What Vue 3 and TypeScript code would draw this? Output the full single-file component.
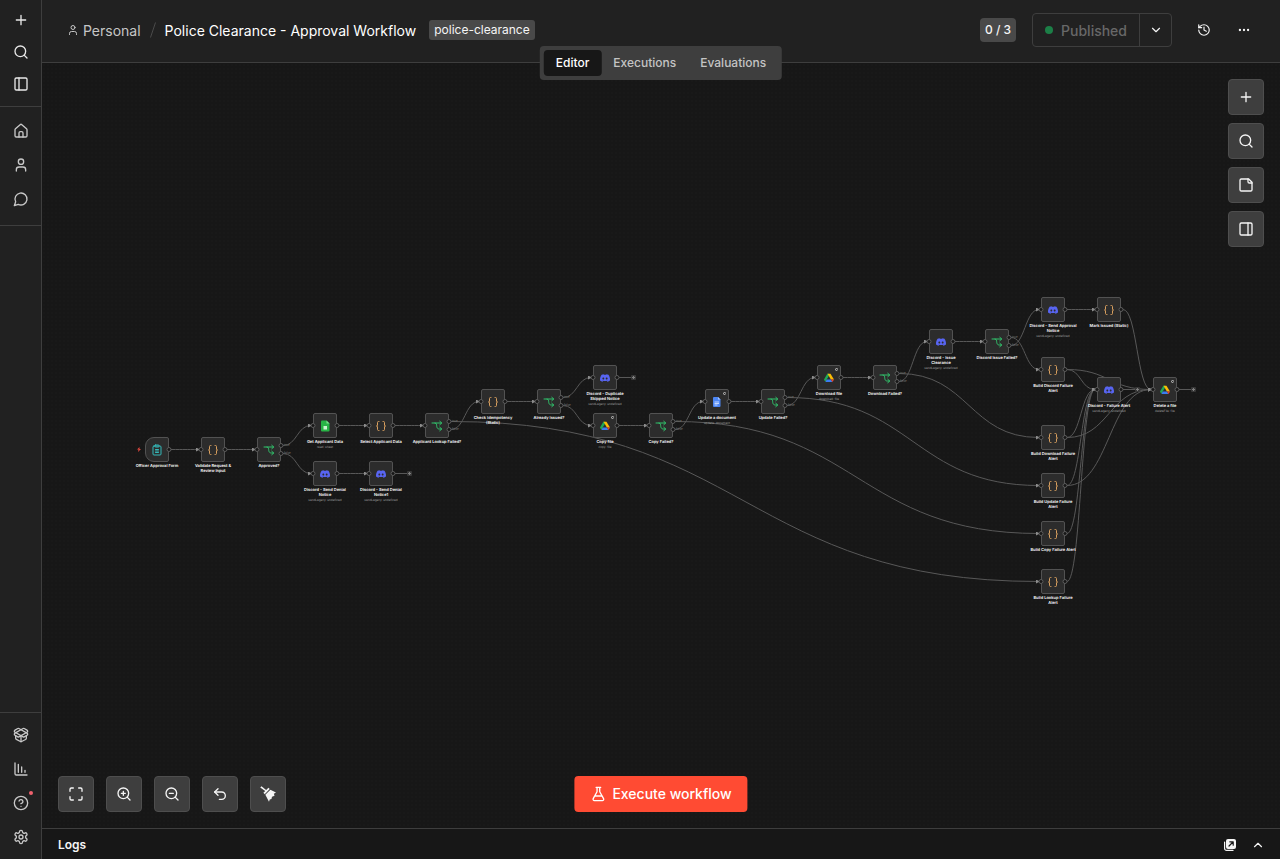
<script setup lang="ts">
import { ref } from 'vue'

type Kind = 'form' | 'code' | 'if' | 'sheets' | 'docs' | 'drive' | 'discord'

interface FlowNode {
  id: string
  kind: Kind
  col: number
  y: number
  label: string
  sub?: string
  retry?: boolean
  open?: boolean
}

const COLUMN = 56
const FIRST = 115
const SEND = 'sendLegacy: undefined'

const nodes: FlowNode[] = [
  { id: 'form', kind: 'form', col: 0, y: 386, label: 'Officer Approval Form' },
  { id: 'validate', kind: 'code', col: 1, y: 386, label: 'Validate Request &\nReview Input' },
  { id: 'approved', kind: 'if', col: 2, y: 386, label: 'Approved?' },
  { id: 'get', kind: 'sheets', col: 3, y: 362, label: 'Get Applicant Data', sub: 'read: sheet' },
  { id: 'denial', kind: 'discord', col: 3, y: 410, label: 'Discord - Send Denial\nNotice', sub: SEND },
  { id: 'select', kind: 'code', col: 4, y: 362, label: 'Select Applicant Data' },
  { id: 'denial1', kind: 'discord', col: 4, y: 410, label: 'Discord - Send Denial\nNotice1', sub: SEND, open: true },
  { id: 'lookupFailed', kind: 'if', col: 5, y: 362, label: 'Applicant Lookup Failed?' },
  { id: 'idempotency', kind: 'code', col: 6, y: 338, label: 'Check Idempotency\n(Static)' },
  { id: 'issued', kind: 'if', col: 7, y: 338, label: 'Already Issued?' },
  { id: 'duplicate', kind: 'discord', col: 8, y: 314, label: 'Discord - Duplicate\nSkipped Notice', sub: SEND, open: true },
  { id: 'copy', kind: 'drive', col: 8, y: 362, label: 'Copy file', sub: 'copy: file', retry: true },
  { id: 'copyFailed', kind: 'if', col: 9, y: 362, label: 'Copy Failed?' },
  { id: 'update', kind: 'docs', col: 10, y: 338, label: 'Update a document', sub: 'update: document', retry: true },
  { id: 'updateFailed', kind: 'if', col: 11, y: 338, label: 'Update Failed?' },
  { id: 'download', kind: 'drive', col: 12, y: 314, label: 'Download file', sub: 'download: file', retry: true },
  { id: 'downloadFailed', kind: 'if', col: 13, y: 314, label: 'Download Failed?' },
  { id: 'clearance', kind: 'discord', col: 14, y: 278, label: 'Discord - Issue\nClearance', sub: SEND },
  { id: 'issueFailed', kind: 'if', col: 15, y: 278, label: 'Discord Issue Failed?' },
  { id: 'approval', kind: 'discord', col: 16, y: 246, label: 'Discord - Send Approval\nNotice', sub: SEND },
  { id: 'buildDiscord', kind: 'code', col: 16, y: 306, label: 'Build Discord Failure\nAlert' },
  { id: 'buildDownload', kind: 'code', col: 16, y: 374, label: 'Build Download Failure\nAlert' },
  { id: 'buildUpdate', kind: 'code', col: 16, y: 422, label: 'Build Update Failure\nAlert' },
  { id: 'buildCopy', kind: 'code', col: 16, y: 470, label: 'Build Copy Failure Alert' },
  { id: 'buildLookup', kind: 'code', col: 16, y: 518, label: 'Build Lookup Failure\nAlert' },
  { id: 'mark', kind: 'code', col: 17, y: 246, label: 'Mark Issued (Static)' },
  { id: 'failure', kind: 'discord', col: 17, y: 326, label: 'Discord - Failure Alert', sub: SEND, open: true },
  { id: 'delete', kind: 'drive', col: 18, y: 326, label: 'Delete a file', sub: 'deleteFile: file', retry: true, open: true },
]

// [source, target, vertical shift of the source handle]
const links: [string, string, number][] = [
  ['form', 'validate', 0],
  ['validate', 'approved', 0],
  ['approved', 'get', -4],
  ['approved', 'denial', 4],
  ['get', 'select', 0],
  ['denial', 'denial1', 0],
  ['select', 'lookupFailed', 0],
  ['lookupFailed', 'buildLookup', -4],
  ['lookupFailed', 'idempotency', 4],
  ['idempotency', 'issued', 0],
  ['issued', 'duplicate', -4],
  ['issued', 'copy', 4],
  ['copy', 'copyFailed', 0],
  ['copyFailed', 'buildCopy', -4],
  ['copyFailed', 'update', 4],
  ['update', 'updateFailed', 0],
  ['updateFailed', 'buildUpdate', -4],
  ['updateFailed', 'download', 4],
  ['download', 'downloadFailed', 0],
  ['downloadFailed', 'buildDownload', -4],
  ['downloadFailed', 'clearance', 4],
  ['clearance', 'issueFailed', 0],
  ['issueFailed', 'buildDiscord', -4],
  ['issueFailed', 'approval', 4],
  ['approval', 'mark', 0],
  ['mark', 'delete', 0],
  ['buildDiscord', 'failure', 0],
  ['buildDiscord', 'delete', 0],
  ['buildDownload', 'failure', 0],
  ['buildDownload', 'delete', 0],
  ['buildUpdate', 'failure', 0],
  ['buildUpdate', 'delete', 0],
  ['buildCopy', 'failure', 0],
  ['buildLookup', 'failure', 0],
]

const byId = new Map(nodes.map((n) => [n.id, n]))
const cx = (n: FlowNode): number => FIRST + n.col * COLUMN
// Boxes are 25px high, so their middle lies on a half pixel.
const cy = (n: FlowNode): number => n.y + 0.5

const edges = links.map(([from, to, shift]) => {
  const s = byId.get(from)!
  const t = byId.get(to)!
  const x1 = cx(s) + 14
  const x2 = cx(t) - 14
  const y1 = cy(s) + shift
  const mid = (x1 + x2) / 2
  return { key: from + to, d: `M${x1} ${y1}C${mid} ${y1} ${mid} ${cy(t)} ${x2} ${cy(t)}` }
})

const inputs = nodes.filter((n) => n.kind !== 'form')
const openEnds = nodes.filter((n) => n.open)
const outputs = nodes.flatMap((n) =>
  n.kind === 'if'
    ? [{ x: cx(n) + 12, y: cy(n) - 4 }, { x: cx(n) + 12, y: cy(n) + 4 }]
    : [{ x: cx(n) + 12, y: cy(n) }],
)

const place = (n: FlowNode) => ({ left: `${cx(n) - 28}px`, top: `${n.y - 12}px` })

const tabs = ['Editor', 'Executions', 'Evaluations']
const active = ref('Editor')

const topNav = [
  { icon: 'plus', label: 'Create' },
  { icon: 'search', label: 'Search' },
  { icon: 'panel-left', label: 'Expand sidebar' },
]
const mainNav = [
  { icon: 'house', label: 'Overview' },
  { icon: 'user', label: 'Personal' },
  { icon: 'chat', label: 'Chat' },
]
const footNav = [
  { icon: 'package', label: 'Templates' },
  { icon: 'chart', label: 'Insights' },
  { icon: 'help', label: 'Help', dot: true },
  { icon: 'settings', label: 'Settings' },
]
const sideTools = [
  { icon: 'plus', label: 'Add node' },
  { icon: 'search', label: 'Search nodes' },
  { icon: 'note', label: 'Add sticky note' },
  { icon: 'panel-right', label: 'Open panel' },
]
const viewTools = [
  { icon: 'maximize', label: 'Fit view' },
  { icon: 'zoom-in', label: 'Zoom in' },
  { icon: 'zoom-out', label: 'Zoom out' },
  { icon: 'undo', label: 'Reset zoom' },
  { icon: 'broom', label: 'Tidy up' },
]
</script>

<template>
  <div class="app">
    <svg class="sprite" aria-hidden="true">
      <symbol id="plus" viewBox="0 0 24 24"><path d="M5 12h14M12 5v14" /></symbol>
      <symbol id="search" viewBox="0 0 24 24"><circle cx="11" cy="11" r="8" /><path d="m21 21-4.3-4.3" /></symbol>
      <symbol id="panel-left" viewBox="0 0 24 24"><rect x="3" y="3" width="18" height="18" rx="2" /><path d="M9 3v18" /></symbol>
      <symbol id="panel-right" viewBox="0 0 24 24"><rect x="3" y="3" width="18" height="18" rx="2" /><path d="M15 3v18" /></symbol>
      <symbol id="house" viewBox="0 0 24 24"><path d="M15 21v-6a2 2 0 0 0-2-2h-2a2 2 0 0 0-2 2v6" /><path d="M3 10a2 2 0 0 1 .7-1.5l7-6a2 2 0 0 1 2.600 0l7 6A2 2 0 0 1 21 10v9a2 2 0 0 1-2 2H5a2 2 0 0 1-2-2z" /></symbol>
      <symbol id="user" viewBox="0 0 24 24"><path d="M19 21v-2a4 4 0 0 0-4-4H9a4 4 0 0 0-4 4v2" /><circle cx="12" cy="7" r="4" /></symbol>
      <symbol id="chat" viewBox="0 0 24 24"><path d="M7.9 20A9 9 0 1 0 4 16.100L2 22Z" /></symbol>
      <symbol id="package" viewBox="0 0 24 24"><path d="M12 22v-9M15.170 2.210a1.670 1.670 0 0 1 1.630 0L21 4.570a1.930 1.930 0 0 1 0 3.360L8.820 14.790a1.655 1.655 0 0 1-1.640 0L3 12.430a1.930 1.930 0 0 1 0-3.360z" /><path d="M20 13v3.870a2.060 2.060 0 0 1-1.110 1.830l-6 3.080a1.930 1.930 0 0 1-1.780 0l-6-3.080A2.060 2.060 0 0 1 4 16.870V13" /><path d="M21 12.430a1.930 1.930 0 0 0 0-3.360L8.830 2.200a1.640 1.640 0 0 0-1.630 0L3 4.570a1.930 1.930 0 0 0 0 3.360l12.180 6.860a1.636 1.636 0 0 0 1.630 0z" /></symbol>
      <symbol id="chart" viewBox="0 0 24 24"><path d="M13 17V9M18 17v-3M3 3v16a2 2 0 0 0 2 2h16M8 17V5" /></symbol>
      <symbol id="help" viewBox="0 0 24 24"><circle cx="12" cy="12" r="10" /><path d="M9.090 9a3 3 0 0 1 5.830 1c0 2-3 3-3 3M12 17h.01" /></symbol>
      <symbol id="settings" viewBox="0 0 24 24"><path d="M12.220 2h-.44a2 2 0 0 0-2 2v.18a2 2 0 0 1-1 1.730l-.43.25a2 2 0 0 1-2 0l-.15-.08a2 2 0 0 0-2.730.73l-.22.38a2 2 0 0 0 .73 2.730l.15.1a2 2 0 0 1 1 1.720v.51a2 2 0 0 1-1 1.740l-.15.09a2 2 0 0 0-.73 2.730l.22.38a2 2 0 0 0 2.730.73l.15-.08a2 2 0 0 1 2 0l.43.25a2 2 0 0 1 1 1.730V20a2 2 0 0 0 2 2h.44a2 2 0 0 0 2-2v-.18a2 2 0 0 1 1-1.730l.43-.25a2 2 0 0 1 2 0l.15.08a2 2 0 0 0 2.730-.73l.22-.39a2 2 0 0 0-.73-2.730l-.15-.08a2 2 0 0 1-1-1.740v-.5a2 2 0 0 1 1-1.740l.15-.09a2 2 0 0 0 .73-2.730l-.22-.38a2 2 0 0 0-2.730-.73l-.15.08a2 2 0 0 1-2 0l-.43-.25a2 2 0 0 1-1-1.730V4a2 2 0 0 0-2-2z" /><circle cx="12" cy="12" r="3" /></symbol>
      <symbol id="note" viewBox="0 0 24 24"><path d="M16 3H5a2 2 0 0 0-2 2v14a2 2 0 0 0 2 2h14a2 2 0 0 0 2-2V8Z" /><path d="M15 3v4a2 2 0 0 0 2 2h4" /></symbol>
      <symbol id="maximize" viewBox="0 0 24 24"><path d="M8 3H5a2 2 0 0 0-2 2v3M21 8V5a2 2 0 0 0-2-2h-3M3 16v3a2 2 0 0 0 2 2h3M16 21h3a2 2 0 0 0 2-2v-3" /></symbol>
      <symbol id="zoom-in" viewBox="0 0 24 24"><circle cx="11" cy="11" r="8" /><path d="m21 21-4.300-4.300M11 8v6M8 11h6" /></symbol>
      <symbol id="zoom-out" viewBox="0 0 24 24"><circle cx="11" cy="11" r="8" /><path d="m21 21-4.300-4.300M8 11h6" /></symbol>
      <symbol id="undo" viewBox="0 0 24 24"><path d="M9 14 4 9l5-5" /><path d="M4 9h10.500a5.500 5.500 0 0 1 0 11H11" /></symbol>
      <symbol id="broom" viewBox="0 0 24 24"><g fill="currentColor" stroke="none"><path d="M.4 2.200 2.200.4 9.200 6l3.400-3.400 2 2L7.100 12.200l-2-2L7.800 7.500z" /><path d="m8 13.200 7.600-7.600L24 9.600l-3.200 2.200 1 2.700-3.800 1.500-.8 3.400-2.600 1-1.100 3.400z" /></g></symbol>
      <symbol id="history" viewBox="0 0 24 24"><path d="M3 12a9 9 0 1 0 9-9 9.750 9.750 0 0 0-6.740 2.740L3 8" /><path d="M3 3v5h5M12 7v5l4 2" /></symbol>
      <symbol id="dots" viewBox="0 0 24 24"><g fill="currentColor"><circle cx="5" cy="12" r="1" /><circle cx="12" cy="12" r="1" /><circle cx="19" cy="12" r="1" /></g></symbol>
      <symbol id="down" viewBox="0 0 24 24"><path d="m6 9 6 6 6-6" /></symbol>
      <symbol id="up" viewBox="0 0 24 24"><path d="m18 15-6-6-6 6" /></symbol>
      <symbol id="flask" viewBox="0 0 24 24"><path d="M14 2v6a2 2 0 0 0 .245.96l5.510 10.080A2 2 0 0 1 18 22H6a2 2 0 0 1-1.755-2.960l5.510-10.080A2 2 0 0 0 10 8V2M6.453 15h11.094M8.500 2h7" /></symbol>
      <symbol id="popout" viewBox="0 0 12 12"><rect x="2" y="0" width="10" height="10" rx="2" fill="currentColor" stroke="none" /><path d="M.6 3v6.400a2 2 0 0 0 2 2H9" stroke-width="1.200" /><path d="M5 7 9 3M5.800 2.800H9.200V6.200" stroke="#171717" stroke-width="1.200" /></symbol>

      <symbol id="n-code" viewBox="0 0 24 24"><path stroke="#d9a05f" d="M8 3H7a2 2 0 0 0-2 2v5a2 2 0 0 1-2 2 2 2 0 0 1 2 2v5c0 1.100.9 2 2 2h1M16 21h1a2 2 0 0 0 2-2v-5c0-1.100.9-2 2-2a2 2 0 0 1-2-2V5a2 2 0 0 0-2-2h-1" /></symbol>
      <symbol id="n-if" viewBox="0 0 24 24"><path stroke="#31c46c" d="M2 6h19M17.500 2.500 21.500 6l-4 3.500M8 6c4 0 3 4 3.500 7s2 5 5 5h4.500M17.500 14.500l4 3.500-4 3.500" /></symbol>
      <symbol id="n-form" viewBox="0 0 24 24"><g stroke="#34b8b8"><rect x="4" y="4" width="16" height="18" rx="2" /><rect x="8" y="2" width="8" height="4" rx="1" /><path d="M9 11h6M9 14h6M9 17h6" /></g></symbol>
      <symbol id="n-discord" viewBox="0 0 24 24"><path fill="#5865f2" stroke="none" d="M20.300 4.400A19.800 19.800 0 0 0 15.400 2.900l-.6 1.300a18.300 18.300 0 0 0-5.500 0l-.6-1.300a19.700 19.700 0 0 0-4.900 1.500C.5 9 -.3 13.600.1 18.100a19.900 19.900 0 0 0 6 3l1.300-2-1.900-.9.400-.3a14.200 14.200 0 0 0 12.200 0l.4.300-1.900.9 1.300 2a19.800 19.800 0 0 0 6-3c.5-5.200-.8-9.700-3.600-13.700ZM8 15.300c-1.200 0-2.200-1.100-2.200-2.400s1-2.400 2.200-2.400 2.200 1.100 2.200 2.400-1 2.400-2.200 2.400Zm8 0c-1.200 0-2.200-1.100-2.200-2.400s1-2.400 2.200-2.400 2.200 1.100 2.200 2.400-1 2.400-2.200 2.400Z" /></symbol>
      <symbol id="n-sheets" viewBox="0 0 24 24"><g stroke="none"><path fill="#28b446" d="M6 1h9l6 6v14a2 2 0 0 1-2 2H6a2 2 0 0 1-2-2V3a2 2 0 0 1 2-2z" /><path fill="#7fe08f" d="M15 1v6h6z" /><rect x="9" y="12" width="7" height="7" fill="#c9f5cf" /></g></symbol>
      <symbol id="n-docs" viewBox="0 0 24 24"><g stroke="none"><path fill="#4d87f5" d="M6 2h8l5 5v13a2 2 0 0 1-2 2H6a2 2 0 0 1-2-2V4a2 2 0 0 1 2-2z" /><path fill="#a9c8ff" d="M14 2v5h5z" /><path fill="#c4d8ff" d="M7 11h9v2H7zM7 14h9v2H7zM7 17h6v2H7z" /></g></symbol>
      <symbol id="n-drive" viewBox="0 0 24 24"><g stroke="none"><path fill="#1fa955" d="M8 2h4.500l1 2L5.500 17.500 3 21 0 15.500z" /><path fill="#fbbc04" d="M8.500 2h7L24 15.500h-7.500z" /><path fill="#3b7df0" d="M6.500 15.500h10L20 21.500H3.500z" /><path fill="#e8442f" d="M16.500 15.500H24l-3.500 6z" /></g></symbol>
    </svg>

    <aside class="rail">
      <nav class="group top" aria-label="Quick actions">
        <button v-for="i in topNav" :key="i.icon" class="rail-item" type="button" :aria-label="i.label">
          <svg class="icon"><use :href="'#' + i.icon" /></svg>
        </button>
      </nav>
      <nav class="group main-nav" aria-label="Main">
        <a v-for="i in mainNav" :key="i.icon" class="rail-item" href="#" :aria-label="i.label">
          <svg class="icon"><use :href="'#' + i.icon" /></svg>
        </a>
      </nav>
      <nav class="group foot" aria-label="More">
        <a v-for="i in footNav" :key="i.icon" class="rail-item" href="#" :aria-label="i.label">
          <svg class="icon"><use :href="'#' + i.icon" /></svg>
          <span v-if="i.dot" class="alert-dot"></span>
        </a>
      </nav>
    </aside>

    <div class="content">
      <header class="bar">
        <a class="owner" href="#">
          <svg class="icon tiny"><use href="#user" /></svg>
          <span>Personal</span>
        </a>
        <svg class="slash" viewBox="0 0 6 16"><path d="M5.500.5.500 15.500" /></svg>
        <h1 class="title">Police Clearance - Approval Workflow</h1>
        <span class="tag">police-clearance</span>
        <div class="actions">
          <span class="count">0 / 3</span>
          <div class="publish">
            <button class="published" type="button" disabled><i class="dot"></i>Published</button>
            <button class="more" type="button" aria-label="Publish options">
              <svg class="icon small"><use href="#down" /></svg>
            </button>
          </div>
          <div class="menu">
            <button class="ghost" type="button" aria-label="Version history">
              <svg class="icon small"><use href="#history" /></svg>
            </button>
            <button class="ghost" type="button" aria-label="Workflow menu">
              <svg class="icon small"><use href="#dots" /></svg>
            </button>
          </div>
        </div>
      </header>

      <div class="tabs" role="tablist">
        <button
          v-for="t in tabs"
          :key="t"
          type="button"
          role="tab"
          class="tab"
          :class="{ active: t === active }"
          :aria-selected="t === active"
          @click="active = t"
        >{{ t }}</button>
      </div>

      <main class="canvas">
        <svg class="edges" aria-hidden="true">
          <defs>
            <marker id="arrow" viewBox="0 0 4 4" refX="3" refY="2" markerWidth="4" markerHeight="4" markerUnits="userSpaceOnUse" orient="0">
              <path d="M0 0 4 2 0 4z" fill="#8c8c8c" />
            </marker>
          </defs>
          <path v-for="e in edges" :key="e.key" class="edge" :d="e.d" marker-end="url(#arrow)" />
          <path v-for="n in openEnds" :key="n.id" class="edge" :d="`M${cx(n) + 14} ${cy(n)}h12`" />
        </svg>

        <div v-for="n in nodes" :key="n.id" class="node" :style="place(n)">
          <div class="box" :class="{ trigger: n.kind === 'form' }">
            <svg class="node-icon" :class="n.kind"><use :href="'#n-' + n.kind" /></svg>
          </div>
          <span class="label">{{ n.label }}</span>
          <span v-if="n.sub" class="sub">{{ n.sub }}</span>
        </div>

        <svg class="edges" aria-hidden="true">
          <path class="bolt" d="M97.500 384 95 386.500h1.500L96 389l3-3h-1.500z" />
          <circle v-for="n in inputs" :key="n.id" class="handle" :cx="cx(n) - 12" :cy="cy(n)" r="2" />
          <circle v-for="(o, k) in outputs" :key="k" class="handle" :cx="o.x" :cy="o.y" r="2" />
          <template v-for="n in nodes" :key="n.id">
            <template v-if="n.kind === 'if'">
              <text class="branch" :x="cx(n) + 15" :y="n.y - 3">true</text>
              <text class="branch" :x="cx(n) + 15" :y="n.y + 5">false</text>
            </template>
            <path v-if="n.retry" class="retry" :d="`M${cx(n) + 8.500} ${cy(n) - 8}a1 1 0 1 1-1-1h1`" />
            <g v-if="n.open">
              <rect class="end" :x="cx(n) + 26" :y="n.y - 2" width="5" height="5" rx="1" />
              <path class="end-plus" :d="`M${cx(n) + 27} ${cy(n)}h3m-1.500-1.500v3`" />
            </g>
          </template>
        </svg>

        <div class="side-tools">
          <button v-for="t in sideTools" :key="t.icon" class="tool" type="button" :aria-label="t.label">
            <svg class="icon"><use :href="'#' + t.icon" /></svg>
          </button>
        </div>
        <div class="view-tools">
          <button v-for="t in viewTools" :key="t.icon" class="tool" type="button" :aria-label="t.label">
            <svg class="icon"><use :href="'#' + t.icon" /></svg>
          </button>
        </div>
        <button class="execute" type="button">
          <svg class="icon"><use href="#flask" /></svg>
          <span>Execute workflow</span>
        </button>
      </main>

      <footer class="logs">
        <span class="logs-title">Logs</span>
        <button class="log-btn" type="button" aria-label="Pop out logs"><svg class="icon pop"><use href="#popout" /></svg></button>
        <button class="log-btn" type="button" aria-label="Open logs"><svg class="icon small"><use href="#up" /></svg></button>
      </footer>
    </div>
  </div>
</template>

<style>
html,
body {
  background: #171717;
}
</style>

<style scoped>
.app {
  display: flex;
  min-height: 100vh;
  background: #171717;
  color: #f5f5f5;
  font-family: Inter, "Liberation Sans", sans-serif;
  font-size: 14px;
}
.app * {
  box-sizing: border-box;
}
button {
  margin: 0;
  padding: 0;
  border: 0;
  background: none;
  color: inherit;
  font: inherit;
  display: flex;
  align-items: center;
  justify-content: center;
}
a {
  color: inherit;
  text-decoration: none;
}
.sprite {
  position: absolute;
  width: 0;
  height: 0;
}
.icon {
  flex: none;
  width: 16px;
  height: 16px;
  fill: none;
  stroke: currentColor;
  stroke-width: 2;
  stroke-linecap: round;
  stroke-linejoin: round;
}
.icon.small {
  width: 14px;
  height: 14px;
}
.icon.tiny,
.icon.pop {
  width: 12px;
  height: 12px;
}

.rail {
  flex: none;
  width: 42px;
  display: flex;
  flex-direction: column;
  background: #212121;
  border-right: 1px solid #3e3e3e;
  color: #c8c8c8;
}
.group {
  display: flex;
  flex-direction: column;
}
.top {
  padding: 4px 0 6px;
  border-bottom: 1px solid #3e3e3e;
  color: #e8e8e8;
}
.top .rail-item {
  height: 32px;
}
.main-nav {
  padding: 7px 0 9px;
  border-bottom: 1px solid #3e3e3e;
}
.foot {
  margin-top: auto;
  padding: 5px 0;
  border-top: 1px solid #3e3e3e;
}
.rail-item {
  position: relative;
  height: 34px;
  display: flex;
  align-items: center;
  justify-content: center;
}
.alert-dot {
  position: absolute;
  top: 5px;
  right: 8px;
  width: 4px;
  height: 4px;
  border-radius: 50%;
  background: #f0616d;
}

.content {
  position: relative;
  flex: 1;
  min-width: 0;
  display: flex;
  flex-direction: column;
}
.bar {
  display: flex;
  align-items: center;
  height: 63px;
  padding: 0 20px 2px 25px;
  background: #212121;
  border-bottom: 1px solid #3e3e3e;
}
.owner {
  display: flex;
  align-items: center;
  gap: 4px;
  color: #c6c6c6;
}
.slash {
  width: 6px;
  height: 16px;
  margin: 0 9px;
  fill: none;
  stroke: #4a4a4a;
}
.title {
  margin: 0;
  font-size: 14px;
  font-weight: 400;
  color: #fff;
  white-space: nowrap;
}
.tag {
  margin-left: 13px;
  padding: 0 5px;
  border-radius: 3px;
  background: #494949;
  color: #f5f5f5;
  font-size: 12px;
  font-weight: 400;
  line-height: 20px;
}
.actions {
  margin-left: auto;
  display: flex;
  align-items: center;
  gap: 16px;
}
.count {
  padding: 0 5px;
  border-radius: 4px;
  background: #494949;
  font-size: 12px;
  font-weight: 500;
  line-height: 24px;
}
.publish {
  display: flex;
  height: 34px;
  border: 1px solid #3e3e3e;
  border-radius: 4px;
}
.published {
  gap: 8px;
  padding: 0 12px;
  color: #686868;
  font-weight: 500;
}
.dot {
  width: 8px;
  height: 8px;
  border-radius: 50%;
  background: #1c7f47;
}
.more {
  width: 32px;
  border-left: 1px solid #3e3e3e;
}
.menu {
  display: flex;
  gap: 8px;
}
.ghost {
  width: 32px;
  height: 32px;
}

.tabs {
  position: absolute;
  z-index: 2;
  top: 46px;
  left: 50%;
  transform: translateX(-50%);
  display: flex;
  padding: 4px;
  border-radius: 4px;
  background: #3e3e3e;
}
.tab {
  height: 26px;
  padding: 0 12px 2px;
  border-radius: 4px;
  color: #c4c4c4;
  font-size: 12px;
  font-weight: 500;
}
.tab.active {
  background: #171717;
  color: #fff;
}

.canvas {
  position: relative;
  flex: 1;
  overflow: hidden;
  background: radial-gradient(circle at 2px 2px, #191919 0 1px, transparent 1px) 0 0 / 4px 4px #171717;
}
.edges {
  position: absolute;
  inset: 0;
  width: 100%;
  height: 100%;
}
.edge {
  fill: none;
  stroke: #585858;
}
.handle {
  fill: #171717;
  stroke: #5c5c5c;
}
.branch {
  fill: #767676;
  font-size: 3px;
}
.bolt {
  fill: #e0483e;
}
.retry {
  fill: none;
  stroke: #c4c4c4;
}
.end {
  fill: #383838;
}
.end-plus {
  stroke: #808080;
}
.node {
  position: absolute;
  width: 56px;
  display: flex;
  flex-direction: column;
  align-items: center;
}
.box {
  width: 24px;
  height: 25px;
  display: flex;
  align-items: center;
  justify-content: center;
  border: 1px solid #525252;
  border-radius: 2px;
  background: #2c2c2c;
}
.box.trigger {
  border-radius: 9px 2px 2px 9px;
}
.node-icon {
  width: 12px;
  height: 12px;
  fill: none;
  stroke-width: 2;
  stroke-linecap: round;
  stroke-linejoin: round;
}
.node-icon.discord,
.node-icon.drive {
  width: 10px;
  height: 10px;
}
.label {
  margin-top: 1px;
  color: #fff;
  font-size: 4px;
  font-weight: 600;
  line-height: 5px;
  text-align: center;
  text-rendering: geometricPrecision;
  white-space: pre;
}
.sub {
  margin-top: 1px;
  color: #a0a0a0;
  font-size: 3px;
  line-height: 4px;
  text-rendering: geometricPrecision;
  white-space: nowrap;
}

.tool {
  width: 36px;
  height: 36px;
  border: 1px solid #4e4e4e;
  border-radius: 4px;
  background: #3e3e3e;
}
.side-tools {
  position: absolute;
  top: 16px;
  right: 16px;
  display: flex;
  flex-direction: column;
  gap: 8px;
}
.view-tools {
  position: absolute;
  left: 16px;
  bottom: 16px;
  display: flex;
  gap: 12px;
}
.execute {
  position: absolute;
  left: 50%;
  bottom: 16px;
  transform: translateX(-50%);
  height: 36px;
  padding: 0 16px;
  gap: 6px;
  border-radius: 4px;
  background: #ff4b33;
  color: #fff;
  font-weight: 500;
  white-space: nowrap;
}
.execute span {
  padding-bottom: 2px;
}

.logs {
  display: flex;
  align-items: center;
  height: 31px;
  padding: 1px 8px 0 16px;
  border-top: 1px solid #3e3e3e;
  background: #171717;
}
.logs-title {
  margin-right: auto;
  font-size: 12px;
  font-weight: 600;
}
.log-btn {
  width: 28px;
  height: 24px;
}
</style>
